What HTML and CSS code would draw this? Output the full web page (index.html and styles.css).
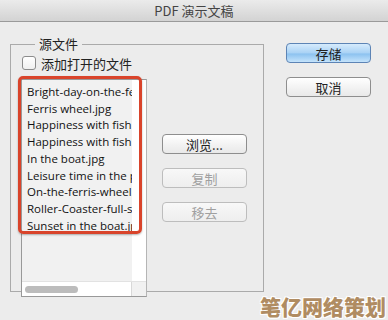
FILE: index.html
```html
<!DOCTYPE html>
<html lang="zh-CN">
<head>
    <meta charset="UTF-8">
    <meta name="viewport" content="width=device-width, initial-scale=1.0">
    <title>PDF 演示文稿</title>
    <link rel="stylesheet" href="styles.css">
</head>
<body>
    <div class="window">
        <div class="titlebar">PDF 演示文稿</div>

        <div class="content">
            <fieldset class="source">
                <legend>源文件</legend>
                <label class="check"><span class="box"></span>添加打开的文件</label>

                <div class="source-row">
                    <div class="listbox">
                        <div class="list-view">
                            <ul class="files">
                                <li>Bright-day-on-the-ferris-wheel.jpg</li>
                                <li>Ferris wheel.jpg</li>
                                <li>Happiness with fish 1.jpg</li>
                                <li>Happiness with fish 2.jpg</li>
                                <li>In the boat.jpg</li>
                                <li>Leisure time in the park.jpg</li>
                                <li>On-the-ferris-wheel.jpg</li>
                                <li>Roller-Coaster-full-speed.jpg</li>
                                <li>Sunset in the boat.jpg</li>
                            </ul>
                            <div class="vscroll"></div>
                        </div>
                        <div class="hscroll">
                            <div class="track"><span class="thumb"></span></div>
                            <span class="corner"></span>
                        </div>
                        <div class="highlight"></div>
                    </div>

                    <div class="file-buttons">
                        <button class="btn">浏览...</button>
                        <button class="btn" disabled>复制</button>
                        <button class="btn" disabled>移去</button>
                    </div>
                </div>
            </fieldset>

            <div class="actions">
                <button class="btn primary">存储</button>
                <button class="btn">取消</button>
            </div>
        </div>

        <div class="watermark">笔亿网络策划</div>
    </div>
</body>
</html>
```

FILE: styles.css
```css
body {
    margin: 0;
    padding: 0;
    font-family: "Open Sans", "Noto Sans CJK SC", sans-serif;
    color: #222;
}

.window {
    position: relative;
    width: 388px;
    height: 320px;
    background-color: #ececec;
    overflow: hidden;
}

.titlebar {
    height: 21px;
    line-height: 22px;
    text-align: center;
    font-family: "Noto Sans CJK SC", sans-serif;
    font-size: 13px;
    color: #444;
    background: linear-gradient(#ebebeb, #d3d3d3);
    border-bottom: 1px solid #9a9a9a;
}

.content {
    display: flex;
    padding: 14px 0 0 10px;
}

.source {
    width: 232px;
    height: 254px;
    margin: 0;
    padding: 0 10px 0 10px;
    border: 1px solid #aaa;
}

.source legend {
    margin-left: 14px;
    padding: 0 4px;
    height: 16px;
    line-height: 16px;
    font-family: "Noto Sans CJK SC", sans-serif;
    font-size: 13px;
}

.check {
    display: flex;
    align-items: center;
    margin: 4px 0 0 1px;
    height: 14px;
    font-family: "Noto Sans CJK SC", sans-serif;
    font-size: 13px;
}

.check .box {
    width: 12px;
    height: 12px;
    margin-right: 5px;
    border: 1px solid #8c8c8c;
    border-radius: 3px;
    background: linear-gradient(#fff, #f0f0f0);
}

.source-row {
    display: flex;
    margin-top: 9px;
}

.listbox {
    position: relative;
    width: 124px;
    height: 216px;
    border: 1px solid #999;
    border-right-color: #b5b5b5;
    background-color: #f1f1f1;
    display: flex;
    flex-direction: column;
}

.list-view {
    flex: 1;
    display: flex;
    overflow: hidden;
}

.files {
    flex: 1;
    margin: 0;
    padding: 4px 0 0 5px;
    list-style: none;
    font-size: 11.5px;
    line-height: 16.7px;
    color: #111;
    white-space: nowrap;
    overflow: hidden;
}

.vscroll {
    width: 14px;
    background-color: #fff;
}

.hscroll {
    height: 14px;
    display: flex;
    border-top: 1px solid #e2e2e2;
}

.hscroll .track {
    flex: 1;
    display: flex;
    align-items: center;
    padding-left: 3px;
    background-color: #fff;
}

.hscroll .thumb {
    width: 53px;
    height: 7px;
    border-radius: 4px;
    background-color: #bcbcbc;
}

.hscroll .corner {
    width: 14px;
    background-color: #f1f1f1;
    border-left: 1px solid #d8d8d8;
}

.highlight {
    position: absolute;
    left: -4px;
    top: -4px;
    width: 118px;
    height: 152px;
    border: 3px solid #d9442b;
    border-radius: 5px;
    box-shadow: 0 1px 2px rgba(0, 0, 0, 0.3);
}

.file-buttons {
    display: flex;
    flex-direction: column;
    gap: 14px;
    margin: 55px 0 0 15px;
}

.btn {
    width: 85px;
    height: 20px;
    padding: 0;
    font-family: "Noto Sans CJK SC", sans-serif;
    font-size: 13px;
    color: #222;
    border: 1px solid #8e8e8e;
    border-radius: 4px;
    background: linear-gradient(#ffffff, #f1f1f1 60%, #e9e9e9);
}

.btn:disabled {
    color: #a0a0a0;
    border-color: #bdbdbd;
    background: linear-gradient(#f8f8f8, #eeeeee);
}

.btn.primary {
    border-color: #5d84b5;
    background: linear-gradient(#d6ebfc, #a9d2f5 50%, #8cc2f0 55%, #c4e3fb);
}

.actions {
    display: flex;
    flex-direction: column;
    gap: 14px;
    margin: 7px 0 0 22px;
}

.watermark {
    position: absolute;
    right: 2px;
    bottom: 1px;
    font-family: "Noto Sans CJK SC", sans-serif;
    font-size: 21px;
    font-weight: 900;
    line-height: 26px;
    color: #b08c62;
    text-shadow: 1px 1px 0 #fff, -1px -1px 0 #fff, 1px -1px 0 #fff, -1px 1px 0 #fff;
}
```
